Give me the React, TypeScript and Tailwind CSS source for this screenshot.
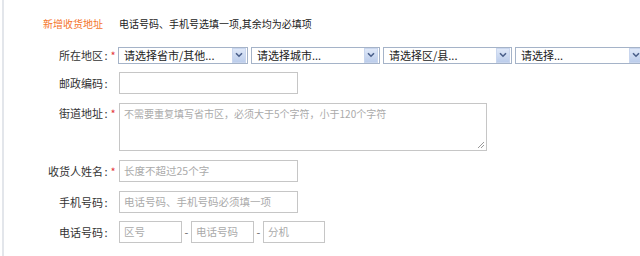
import React from 'react';

const font = { fontFamily: '"Noto Sans CJK SC", "Liberation Sans", sans-serif' };

const SelectBox: React.FC<{ text: string; width: string }> = ({ text, width }) => (
  <div className={`${width} h-[17px] shrink-0 flex items-center border border-[#a5b3c8] bg-white`}>
    <span className="flex-1 pl-[5px] text-[11px] leading-[15px] text-[#222] whitespace-nowrap">{text}</span>
    <span className="w-[14px] h-[15px] mr-[1px] flex items-center justify-center bg-gradient-to-b from-[#dfe8f8] to-[#bccdeb] border border-[#c9d6ee]">
      <svg width="8" height="6" viewBox="0 0 8 6">
        <path d="M1 1.2 L4 4.2 L7 1.2" fill="none" stroke="#4a5f8a" strokeWidth="1.6" />
      </svg>
    </span>
  </div>
);

const Label: React.FC<{ text: string; required?: boolean; top?: boolean }> = ({ text, required, top }) => (
  <div className={`w-[115px] shrink-0 flex justify-end pr-[2px] ${top ? 'items-start pt-[1px]' : 'items-center'}`}>
    <span className="text-[11px] leading-[18px] text-[#333] whitespace-nowrap">{text}</span>
    <span className="w-[6px] text-center text-[11px] leading-[18px] text-[#333]">:</span>
    <span className="w-[8px] text-center text-[11px] leading-[18px] text-[#e4393c]">{required ? '*' : ''}</span>
  </div>
);

const TextInput: React.FC<{ placeholder?: string; width: string }> = ({ placeholder, width }) => (
  <div className={`${width} h-[22px] shrink-0 flex items-center border border-[#c6c6c6] bg-white pl-[4px]`}>
    <span className="text-[10.5px] leading-[16px] text-[#aaa] whitespace-nowrap">{placeholder}</span>
  </div>
);

export default function App() {
  return (
    <div className="w-[640px] h-[256px] overflow-hidden bg-white flex" style={font}>
      <div className="w-[2px] shrink-0" />
      <div className="w-[2px] shrink-0 bg-[#e3e6eb]" />
      <div className="flex-1 flex flex-col">
        {/* header */}
        <div className="mt-[14px] h-[18px] flex items-center pl-[39px] whitespace-nowrap">
          <span className="text-[10px] text-[#f4742c]">新增收货地址</span>
          <span className="ml-[16px] text-[10px] text-[#222]">电话号码、手机号选填一项,其余均为必填项</span>
        </div>

        {/* region */}
        <div className="mt-[14px] flex items-center">
          <Label text="所在地区" required />
          <div className="-ml-[1px] flex gap-[3px]">
            <SelectBox text="请选择省市/其他..." width="w-[130px]" />
            <SelectBox text="请选择城市..." width="w-[129px]" />
            <SelectBox text="请选择区/县..." width="w-[129px]" />
            <SelectBox text="请选择..." width="w-[130px]" />
          </div>
        </div>

        {/* postcode */}
        <div className="mt-[8px] flex items-center">
          <Label text="邮政编码" />
          <TextInput width="w-[179px]" />
        </div>

        {/* street */}
        <div className="mt-[9px] flex">
          <Label text="街道地址" required top />
          <div className="relative w-[368px] h-[48px] border border-[#c6c6c6] bg-white pl-[4px] pt-[3px]">
            <span className="block text-[10px] leading-[14px] text-[#aaa] whitespace-nowrap">不需要重复填写省市区，必须大于5个字符，小于120个字符</span>
            <svg className="absolute right-[1px] bottom-[1px]" width="8" height="8" viewBox="0 0 8 8">
              <path d="M7 1 L1 7 M7 4 L4 7" stroke="#9a9a9a" strokeWidth="1" />
            </svg>
          </div>
        </div>

        {/* name */}
        <div className="mt-[9px] flex items-center">
          <Label text="收货人姓名" required />
          <TextInput placeholder="长度不超过25个字" width="w-[179px]" />
        </div>

        {/* mobile */}
        <div className="mt-[9px] flex items-center">
          <Label text="手机号码" />
          <TextInput placeholder="电话号码、手机号码必须填一项" width="w-[179px]" />
        </div>

        {/* phone */}
        <div className="mt-[8px] flex items-center">
          <Label text="电话号码" />
          <TextInput placeholder="区号" width="w-[63px]" />
          <span className="w-[9px] text-center text-[11px] text-[#666]">-</span>
          <TextInput placeholder="电话号码" width="w-[63px]" />
          <span className="w-[9px] text-center text-[11px] text-[#666]">-</span>
          <TextInput placeholder="分机" width="w-[62px]" />
        </div>
      </div>
    </div>
  );
}
